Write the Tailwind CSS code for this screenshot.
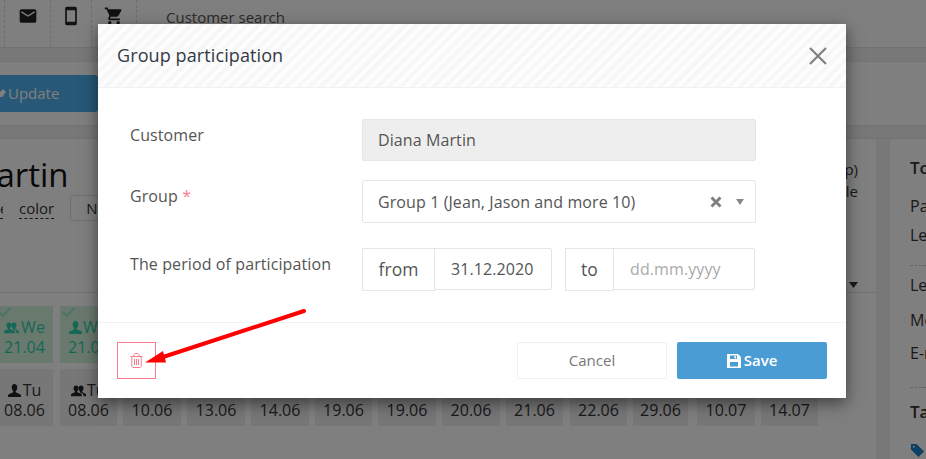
<!DOCTYPE html>
<html lang="en">
<head>
    <meta charset="UTF-8">
    <title>Group participation</title>
    <script src="https://cdn.jsdelivr.net/npm/@tailwindcss/browser@4"></script>
</head>
<body class="relative h-[459px] w-[926px] overflow-hidden bg-white font-['Open_Sans',sans-serif] text-[#333]">
    <!-- page behind the dialog -->
    <div class="flex h-[48px] items-center border-b border-[#e4e4e4] bg-white">
        <div class="ml-[4px] flex h-[48px] w-[47px] items-start justify-center border-x border-dashed border-[#ddd] pt-[6px]">
            <svg class="h-[20px] w-[20px] fill-[#222]" viewBox="0 0 24 24"><path d="M20 4H4c-1.1 0-1.99.9-1.99 2L2 18c0 1.1.9 2 2 2h16c1.1 0 2-.9 2-2V6c0-1.1-.9-2-2-2zm0 4l-8 5-8-5V6l8 5 8-5v2z"/></svg>
        </div>
        <div class="flex h-[48px] w-[41px] items-start justify-center border-r border-dashed border-[#ddd] pt-[6px]">
            <svg class="h-[20px] w-[20px] fill-[#222]" viewBox="0 0 24 24"><path d="M17 1.01L7 1c-1.1 0-2 .9-2 2v18c0 1.1.9 2 2 2h10c1.1 0 2-.9 2-2V3c0-1.1-.9-1.99-2-1.99zM17 19H7V5h10v14z"/></svg>
        </div>
        <div class="flex h-[48px] w-[45px] items-start justify-center border-r border-dashed border-[#ddd] pt-[6px]">
            <svg class="h-[20px] w-[20px] fill-[#222]" viewBox="0 0 24 24"><path d="M7 18c-1.1 0-1.99.9-1.99 2S5.9 22 7 22s2-.9 2-2-.9-2-2-2zM1 2v2h2l3.6 7.59-1.35 2.45c-.16.28-.25.61-.25.96 0 1.1.9 2 2 2h12v-2H7.42c-.14 0-.25-.11-.25-.25l.03-.12.9-1.83h7.45c.75 0 1.41-.41 1.75-1.03l3.58-6.49c.08-.14.12-.31.12-.48 0-.55-.45-1-1-1H5.21l-.94-2H1zm16 16c-1.1 0-1.99.9-1.99 2s.89 2 1.99 2 2-.9 2-2-.9-2-2-2z"/></svg>
        </div>
        <div class="ml-[29px] self-start pt-[6px] text-[15px] text-[#555]">Customer search</div>
    </div>
    <div class="h-[14px] border-b border-[#e4e4e4] bg-[#f0f0f0]"></div>
    <div class="flex h-[63px] items-center bg-white">
        <div class="flex h-[37px] w-[98px] items-center gap-[2px] rounded-r-[3px] bg-[#4fb0ee] text-[15px] font-medium text-white">
            <svg class="h-[10px] w-[6px] fill-white" viewBox="0 0 6 10"><path d="M0 3l3-3 3 3-3.500 5H0z"/></svg>
            Update
        </div>
    </div>
    <div class="h-[14px] border-y border-[#e4e4e4] bg-[#f0f0f0]"></div>

    <div class="flex h-[320px] bg-[#f0f0f0]">
        <div class="w-[876px] overflow-hidden bg-white">
            <div class="flex h-[154px] flex-col border-b border-[#e4e4e4]">
                <div class="ml-[-131px] pt-[16px] text-[33px] leading-[40px] font-medium text-[#111]">Diana Martin</div>
                <div class="flex h-[26px] items-center">
                    <span class="w-[3px] overflow-hidden border-b border-dashed border-[#333] text-[15px] leading-[20px]">e</span>
                    <span class="ml-[16px] border-b border-dashed border-[#333] text-[15px] leading-[20px]">color</span>
                    <span class="ml-[16px] flex h-[26px] w-[60px] items-center rounded-[3px] border border-[#ddd] pl-[15px] text-[15px]">N</span>
                </div>
            </div>
            <div class="mt-[13px] flex gap-[6px]">
                <div class="relative ml-[-4px] h-[57px] w-[57px] bg-[#d4f2da] pt-[11px] text-center text-[16px] leading-[20px] text-[#2ad0ae]">
                    <svg class="absolute top-[1px] left-[2px] h-[11px] w-[13px] fill-none stroke-[#9fe8cf] stroke-[2.5]" viewBox="0 0 13 11"><path d="M1 5l4 4 7-8"/></svg>
                    <span class="flex items-center justify-center gap-[2px]">
                        <svg class="h-[13px] w-[15px] fill-[#2ad0ae]" viewBox="0 0 18 14"><path d="M12 1c-2 0-3 1.500-3 3.200 0 1.800 1 3 1.600 3.800v1L14 11c.6.300 1 .8 1 1.500V14h3v-2c0-.7-.3-1.100-1-1.400L13.500 9V8C14.200 7 15 5.800 15 4.200 15 2.500 14 1 12 1z"/><path d="M6 1C4 1 3 2.500 3 4.200c0 1.800 1 3 1.600 3.800v1L1 10.600c-.7.3-1 .7-1 1.400v2h13v-2c0-.7-.3-1.100-1-1.400L7.500 9V8C8.200 7 9 5.800 9 4.200 9 2.500 8 1 6 1z"/></svg>
                        We
                    </span>
                    21.04
                </div>
                <div class="relative ml-[1px] h-[57px] w-[57px] bg-[#d4f2da] pt-[11px] text-[16px] leading-[20px] text-[#2ad0ae]">
                    <svg class="absolute top-[1px] left-[2px] h-[11px] w-[13px] fill-none stroke-[#9fe8cf] stroke-[2.5]" viewBox="0 0 13 11"><path d="M1 5l4 4 7-8"/></svg>
                    <span class="flex items-center gap-[1px] pl-[9px]">
                        <svg class="h-[13px] w-[13px] fill-[#2ad0ae]" viewBox="0 0 14 14"><path d="M7 0C5 0 4 1.500 4 3.500 4 5.500 5 7 5.700 8v1L1 11c-.6.300-1 .8-1 1.500V14h14v-1.500c0-.7-.4-1.200-1-1.500L8.300 9V8C9 7 10 5.500 10 3.500 10 1.500 9 0 7 0z"/></svg>
                        We
                    </span>
                    <span class="pl-[8px]">21.04</span>
                </div>
            </div>
            <div class="mt-[6px] flex gap-[6px] text-center text-[16px] leading-[20px]">
                <div class="ml-[-4px] h-[57px] w-[57px] bg-[#eee] pt-[11px]">
                    <span class="flex items-center justify-center gap-[2px]">
                        <svg class="h-[13px] w-[13px] fill-[#222]" viewBox="0 0 14 14"><path d="M7 0C5 0 4 1.500 4 3.500 4 5.500 5 7 5.700 8v1L1 11c-.6.300-1 .8-1 1.500V14h14v-1.500c0-.7-.4-1.200-1-1.500L8.300 9V8C9 7 10 5.500 10 3.500 10 1.500 9 0 7 0z"/></svg>
                        Tu
                    </span>
                    08.06
                </div>
                <div class="ml-[1px] h-[57px] w-[57px] bg-[#eee] pt-[11px]">
                    <span class="flex items-center gap-[1px] pl-[11px]">
                        <svg class="h-[13px] w-[15px] fill-[#222]" viewBox="0 0 18 14"><path d="M12 1c-2 0-3 1.500-3 3.200 0 1.800 1 3 1.600 3.800v1L14 11c.6.300 1 .8 1 1.500V14h3v-2c0-.7-.3-1.100-1-1.400L13.500 9V8C14.200 7 15 5.800 15 4.200 15 2.500 14 1 12 1z"/><path d="M6 1C4 1 3 2.500 3 4.200c0 1.800 1 3 1.600 3.800v1L1 10.600c-.7.3-1 .7-1 1.400v2h13v-2c0-.7-.3-1.100-1-1.400L7.500 9V8C8.200 7 9 5.800 9 4.200 9 2.500 8 1 6 1z"/></svg>
                        Tu
                    </span>
                    08.06
                </div>
                <div class="h-[57px] w-[58px] bg-[#eee] pt-[31px]">10.06</div>
                <div class="h-[57px] w-[58px] bg-[#eee] pt-[31px]">13.06</div>
                <div class="h-[57px] w-[58px] bg-[#eee] pt-[31px]">14.06</div>
                <div class="h-[57px] w-[57px] bg-[#eee] pt-[31px]">19.06</div>
                <div class="h-[57px] w-[58px] bg-[#eee] pt-[31px]">19.06</div>
                <div class="h-[57px] w-[58px] bg-[#eee] pt-[31px]">20.06</div>
                <div class="h-[57px] w-[57px] bg-[#eee] pt-[31px]">21.06</div>
                <div class="ml-[1px] h-[57px] w-[57px] bg-[#eee] pt-[31px]">22.06</div>
                <div class="h-[57px] w-[55px] bg-[#eee] pt-[31px]">29.06</div>
                <div class="ml-[3px] h-[57px] w-[58px] bg-[#eee] pt-[31px]">10.07</div>
                <div class="h-[57px] w-[57px] bg-[#eee] pt-[31px]">14.07</div>
            </div>
        </div>
        <div class="ml-[14px] flex-1 overflow-hidden whitespace-nowrap bg-white pl-[20px] text-[16px]">
            <div class="pt-[16px] text-[17px] font-semibold">Total</div>
            <div class="mt-[14px] leading-[22px]">Paid</div>
            <div class="mt-[7px] leading-[22px]">Left</div>
            <div class="mt-[19px] border-t border-dashed border-[#ccc] pt-[8px] leading-[22px]">Left</div>
            <div class="mt-[13px] leading-[22px]">Mobile</div>
            <div class="mt-[11px] leading-[22px]">E-mail</div>
            <div class="mt-[23px] border-t border-dashed border-[#ccc] pt-[12px] text-[17px] leading-[24px] font-semibold">Tags</div>
            <svg class="mt-[19px] h-[15px] w-[15px] fill-[#1a80c8]" viewBox="0 0 16 16"><path d="M1 1h6l8 8-6 6-8-8zM4 3a1 1 0 1 0 0 2 1 1 0 0 0 0-2z"/></svg>
        </div>
    </div>

    <!-- bits of the page that stick out to the right of the dialog -->
    <div class="absolute top-[158px] right-[68px] text-right text-[15px] leading-[22px] text-[#333]">(p)<br>le</div>
    <svg class="absolute top-[282px] left-[849px] h-[6px] w-[9px] fill-[#333]" viewBox="0 0 9 6"><path d="M0 0h9L4.500 6z"/></svg>

    <div class="absolute inset-0 bg-black/50"></div>

    <!-- dialog -->
    <div class="absolute top-[24px] left-[98px] w-[748px] bg-white shadow-[0_5px_15px_rgba(0,0,0,0.5)]">
        <div class="flex h-[64px] items-center justify-between border-b border-[#f2f2f2] bg-[repeating-linear-gradient(135deg,#f7f7f7_0,#f7f7f7_4px,#fdfdfd_4px,#fdfdfd_8px)] px-[19px]">
            <h4 class="text-[18px] font-medium tracking-[0.1px] text-[#333a45]">Group participation</h4>
            <svg class="h-[18px] w-[18px] stroke-[#808080] stroke-[2.2]" viewBox="0 0 18 18"><path d="M1 1l16 16M17 1L1 17"/></svg>
        </div>
        <div class="px-[32px] pt-[31px] pb-[31px] text-[16px] tracking-[0.1px]">
            <div class="flex">
                <label class="w-[232px] pt-[4px] leading-[24px] text-[#555]">Customer</label>
                <div class="flex h-[42px] w-[394px] items-center rounded-[2px] border border-[#e6e6e6] bg-[#eee] px-[15px] text-[#555]">Diana Martin</div>
            </div>
            <div class="mt-[19px] flex">
                <label class="w-[232px] pt-[4px] leading-[24px] text-[#555]">Group <span class="text-[#f87e8e]">*</span></label>
                <div class="flex h-[43px] w-[394px] items-center justify-between rounded-[2px] border border-[#e6e6e6] bg-white pr-[11px] pl-[15px] text-[#555]">
                    <span>Group 1 (Jean, Jason and more 10)</span>
                    <span class="flex items-center gap-[14px]">
                        <svg class="h-[12px] w-[12px] stroke-[#808080] stroke-[3]" viewBox="0 0 12 12"><path d="M1.500 1.500l9 9M10.500 1.500l-9 9"/></svg>
                        <svg class="h-[6px] w-[8px] fill-[#888]" viewBox="0 0 8 6"><path d="M0 0h8L4 6z"/></svg>
                    </span>
                </div>
            </div>
            <div class="mt-[25px] flex">
                <label class="w-[232px] pt-[4px] leading-[24px] text-[#555]">The period of participation</label>
                <div class="flex h-[43px] w-[73px] items-center justify-center border border-[#e6e6e6] text-[17.500px] tracking-normal text-[#555]">from</div>
                <div class="ml-[-1px] flex h-[42px] w-[118px] items-center rounded-r-[2px] border border-[#e6e6e6] pl-[16px] text-[#555]">31.12.2020</div>
                <div class="ml-[13px] flex h-[43px] w-[49px] items-center justify-center border border-[#e6e6e6] text-[17.500px] tracking-normal text-[#555]">to</div>
                <div class="ml-[-1px] flex h-[42px] w-[142px] items-center rounded-r-[2px] border border-[#e6e6e6] pl-[16px] text-[#aaa]">dd.mm.yyyy</div>
            </div>
        </div>
        <div class="flex h-[76px] items-center justify-between border-t border-[#f2f2f2] px-[19px]">
            <button class="flex h-[37px] w-[39px] items-center justify-center border border-[#f87e8e]">
                <svg class="h-[15px] w-[13px] fill-none stroke-[#f87e8e] stroke-[1]" viewBox="0 0 13 15"><path d="M.5 3.500h12M4 3.500V1.500l1-1h3l1 1v2M1.800 3.500v10l1 1h7.400l1-1v-10M4.500 6v6M6.500 6v6M8.500 6v6"/></svg>
            </button>
            <div class="flex gap-[10px]">
                <button class="h-[37px] w-[150px] rounded-[2px] border border-[#eee] bg-white text-[15px] text-[#777]">Cancel</button>
                <button class="flex h-[37px] w-[150px] items-center justify-center gap-[3px] rounded-[2px] bg-[#4a9cd4] text-[15px] font-semibold text-white">
                    <svg class="h-[14px] w-[14px] fill-white" viewBox="0 0 14 14"><path fill-rule="evenodd" d="M0 0h11l3 3v11H0zM3 1.500v3.500h7V1.500zM7.500 2h1.500v2.500H7.500zM3 8v4.500h8V8z"/></svg>
                    Save
                </button>
            </div>
        </div>
    </div>

    <!-- annotation arrow -->
    <svg class="absolute top-0 left-0 h-[459px] w-[926px]" viewBox="0 0 926 459">
        <path d="M304 311L160 358" stroke="#ff0000" stroke-width="4" stroke-linecap="round"/>
        <path d="M145 362.500L163 351L166 362.500z" fill="#ff0000"/>
    </svg>
</body>
</html>
